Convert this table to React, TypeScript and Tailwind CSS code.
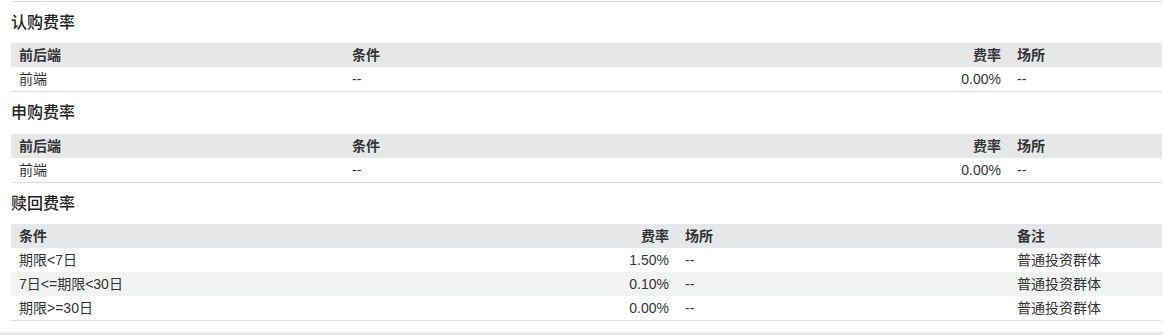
import React from "react";

const font = { fontFamily: '"Liberation Sans", "Noto Sans CJK SC", sans-serif' };

function Section({
  title,
  cols,
  headers,
  aligns,
  rows,
  striped,
  titleH,
}: {
  title: string;
  cols: string;
  headers: string[];
  aligns: string[];
  rows: string[][];
  striped?: boolean;
  titleH: string;
}) {
  return (
    <div>
      <div className={`${titleH} flex items-center text-[16px] font-medium text-[#222]`}>{title}</div>
      <div className="border-b border-[#dcdcdc]">
        <div className={`grid ${cols} h-6 items-center bg-[#e6e7e9] font-bold text-[#333]`}>
          {headers.map((h, i) => (
            <div key={i} className={`px-2 ${aligns[i]}`}>
              {h}
            </div>
          ))}
        </div>
        {rows.map((r, ri) => (
          <div
            key={ri}
            className={`grid ${cols} h-6 items-center text-[#333] ${
              striped && ri % 2 === 1 ? "bg-[#f1f2f2]" : "bg-white"
            }`}
          >
            {r.map((c, i) => (
              <div key={i} className={`px-2 ${aligns[i]}`}>
                {c}
              </div>
            ))}
          </div>
        ))}
      </div>
    </div>
  );
}

export default function App() {
  const cols1 = "grid-cols-[333px_556px_109px_1fr]";
  const cols3 = "grid-cols-[489px_177px_332px_1fr]";
  return (
    <div className="w-[1163px] bg-white text-[14px]" style={font}>
      <div className="pt-px pl-[11px] pr-px pb-[11px]">
        <div className="border-t border-[#dcdcdc]">
          <Section
            title="认购费率"
            titleH="h-[41px]"
            cols={cols1}
            headers={["前后端", "条件", "费率", "场所"]}
            aligns={["text-left", "text-left", "text-right", "text-left"]}
            rows={[["前端", "--", "0.00%", "--"]]}
          />
          <Section
            title="申购费率"
            titleH="h-[42px]"
            cols={cols1}
            headers={["前后端", "条件", "费率", "场所"]}
            aligns={["text-left", "text-left", "text-right", "text-left"]}
            rows={[["前端", "--", "0.00%", "--"]]}
          />
          <Section
            title="赎回费率"
            titleH="h-[41px]"
            cols={cols3}
            headers={["条件", "费率", "场所", "备注"]}
            aligns={["text-left", "text-right", "text-left", "text-left"]}
            striped
            rows={[
              ["期限<7日", "1.50%", "--", "普通投资群体"],
              ["7日<=期限<30日", "0.10%", "--", "普通投资群体"],
              ["期限>=30日", "0.00%", "--", "普通投资群体"],
            ]}
          />
        </div>
      </div>
      <div className="h-[4px] bg-[#ececec]" />
    </div>
  );
}
